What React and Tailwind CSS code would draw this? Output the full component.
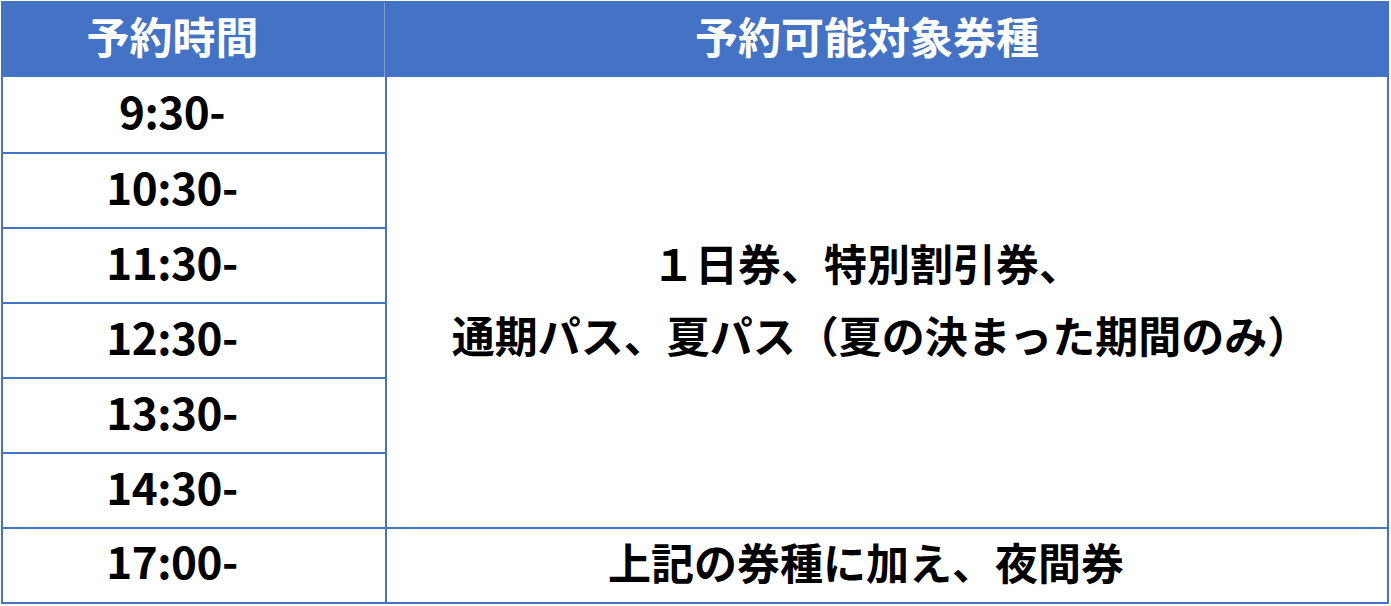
import React from "react";

const times = ["9:30-", "10:30-", "11:30-", "12:30-", "13:30-", "14:30-"];

export default function App() {
  return (
    <div
      className="w-[1391px] h-[606px] bg-white pt-px pl-px"
      style={{ fontFamily: '"Noto Sans CJK JP", "Noto Sans", sans-serif' }}
    >
      <div className="w-[1388px] h-[603px] overflow-hidden flex flex-col border-2 border-[#4472C4] text-black font-bold leading-none">
        {/* header */}
        <div className="grid grid-cols-[382px_1fr] h-[74px] shrink-0 bg-[#4472C4] text-white text-[43px]">
          <div className="flex items-center justify-center border-r border-[#7f9fd8] pr-[42px] pb-[10px]">
            予約時間
          </div>
          <div className="flex items-center justify-center pr-[38px] pb-[10px]">
            予約可能対象券種
          </div>
        </div>

        {/* daytime rows */}
        <div className="grid grid-cols-[382px_1fr] shrink-0">
          <div className="flex flex-col">
            {times.map((t, i) => (
              <div
                key={t}
                className={
                  "h-[75px] flex items-center justify-center text-[44px] tracking-[-0.5px] pr-[44px] pb-[10px] " +
                  (i > 0 ? "border-t-2 border-[#4472C4]" : "")
                }
              >
                {t}
              </div>
            ))}
          </div>
          <div className="border-l-2 border-[#4472C4] flex flex-col items-center justify-center text-[43px] leading-[72px] pb-[8px]">
            <div className="pr-[40px]">１日券、特別割引券、</div>
            <div className="pr-[12px]">通期パス、夏パス（夏の決まった期間のみ）</div>
          </div>
        </div>

        {/* evening row */}
        <div className="grid grid-cols-[382px_1fr] flex-1 border-t-2 border-[#4472C4]">
          <div className="flex items-center justify-center text-[44px] tracking-[-0.5px] pr-[44px] pb-[12px]">
            17:00-
          </div>
          <div className="border-l-2 border-[#4472C4] flex items-center justify-center text-[43px] pr-[42px] pb-[8px]">
            上記の券種に加え、夜間券
          </div>
        </div>
      </div>
    </div>
  );
}
